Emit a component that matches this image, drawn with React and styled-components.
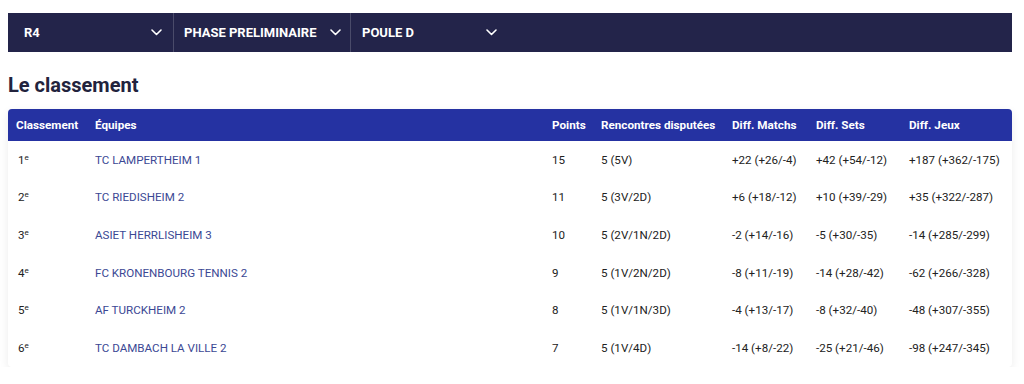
import styled, { createGlobalStyle } from "styled-components";

const GlobalStyle = createGlobalStyle`
  body {
    margin: 0;
    background: #ffffff;
    font-family: Roboto, "Liberation Sans", sans-serif;
  }
`;

const Page = styled.div`
  padding: 13px 12px 0 8px;
`;

const FilterBar = styled.div`
  display: flex;
  height: 39px;
  background: #23244a;
`;

const Filter = styled.div`
  display: flex;
  align-items: center;
  justify-content: space-between;
  width: ${(p) => p.$width}px;
  padding: 0 ${(p) => p.$right}px 0 ${(p) => p.$left}px;
  box-sizing: border-box;
  border-right: ${(p) => (p.$last ? "none" : "1px solid #4a4b6a")};
  color: #ffffff;
  font-size: 13px;
  font-weight: 700;
  text-transform: uppercase;
`;

const Title = styled.h2`
  margin: 21px 0 12px;
  font-size: 20px;
  font-weight: 700;
  color: #22233d;
`;

const Card = styled.div`
  background: #fff;
  border-radius: 4px;
  overflow: hidden;
  box-shadow: 0 3px 10px rgba(0, 0, 0, 0.08);
`;

const Table = styled.table`
  width: 100%;
  border-collapse: collapse;
  table-layout: fixed;
  font-size: 11.6px;
`;

const Th = styled.th`
  height: 32px;
  padding: 0 0 0 8px;
  background: #2532a2;
  color: #fff;
  font-size: 11.7px;
  font-weight: 700;
  text-align: left;
  white-space: nowrap;
`;

const Td = styled.td`
  height: 37.6px;
  padding: 0 0 0 ${(p) => (p.$first ? 10 : 8)}px;
  color: ${(p) => (p.$team ? "#3b4894" : "#222")};
  white-space: nowrap;
`;

const Sup = styled.sup`
  font-size: 8px;
  vertical-align: 4px;
  line-height: 0;
`;

const Chevron = () => (
  <svg width="11" height="7" viewBox="0 0 11 7" fill="none">
    <path d="M1 1l4.5 4.5L10 1" stroke="#fff" strokeWidth="1.6" strokeLinecap="round" strokeLinejoin="round" />
  </svg>
);

const filters = [
  { label: "R4", width: 166, left: 16, right: 11 },
  { label: "Phase preliminaire", width: 177, left: 10, right: 9 },
  { label: "Poule D", width: 157, left: 11, right: 11, last: true },
];

const cols = [79, 457, 49, 131, 84, 93, 111];
const heads = ["Classement", "Équipes", "Points", "Rencontres disputées", "Diff. Matchs", "Diff. Sets", "Diff. Jeux"];

const rows = [
  ["TC LAMPERTHEIM 1", "15", "5 (5V)", "+22 (+26/-4)", "+42 (+54/-12)", "+187 (+362/-175)"],
  ["TC RIEDISHEIM 2", "11", "5 (3V/2D)", "+6 (+18/-12)", "+10 (+39/-29)", "+35 (+322/-287)"],
  ["ASIET HERRLISHEIM 3", "10", "5 (2V/1N/2D)", "-2 (+14/-16)", "-5 (+30/-35)", "-14 (+285/-299)"],
  ["FC KRONENBOURG TENNIS 2", "9", "5 (1V/2N/2D)", "-8 (+11/-19)", "-14 (+28/-42)", "-62 (+266/-328)"],
  ["AF TURCKHEIM 2", "8", "5 (1V/1N/3D)", "-4 (+13/-17)", "-8 (+32/-40)", "-48 (+307/-355)"],
  ["TC DAMBACH LA VILLE 2", "7", "5 (1V/4D)", "-14 (+8/-22)", "-25 (+21/-46)", "-98 (+247/-345)"],
];

const App = () => (
  <>
    <GlobalStyle />
    <Page>
      <FilterBar>
        {filters.map((f) => (
          <Filter key={f.label} $width={f.width} $left={f.left} $right={f.right} $last={f.last}>
            <span>{f.label}</span>
            <Chevron />
          </Filter>
        ))}
      </FilterBar>
      <Title>Le classement</Title>
      <Card>
        <Table>
          <colgroup>
            {cols.map((w, i) => (
              <col key={i} style={{ width: w }} />
            ))}
          </colgroup>
          <thead>
            <tr>
              {heads.map((h) => (
                <Th key={h}>{h}</Th>
              ))}
            </tr>
          </thead>
          <tbody>
            {rows.map((r, i) => (
              <tr key={r[0]}>
                <Td $first>
                  {i + 1}
                  <Sup>e</Sup>
                </Td>
                <Td $team>{r[0]}</Td>
                {r.slice(1).map((v, j) => (
                  <Td key={j}>{v}</Td>
                ))}
              </tr>
            ))}
          </tbody>
        </Table>
      </Card>
    </Page>
  </>
);

export default App;
